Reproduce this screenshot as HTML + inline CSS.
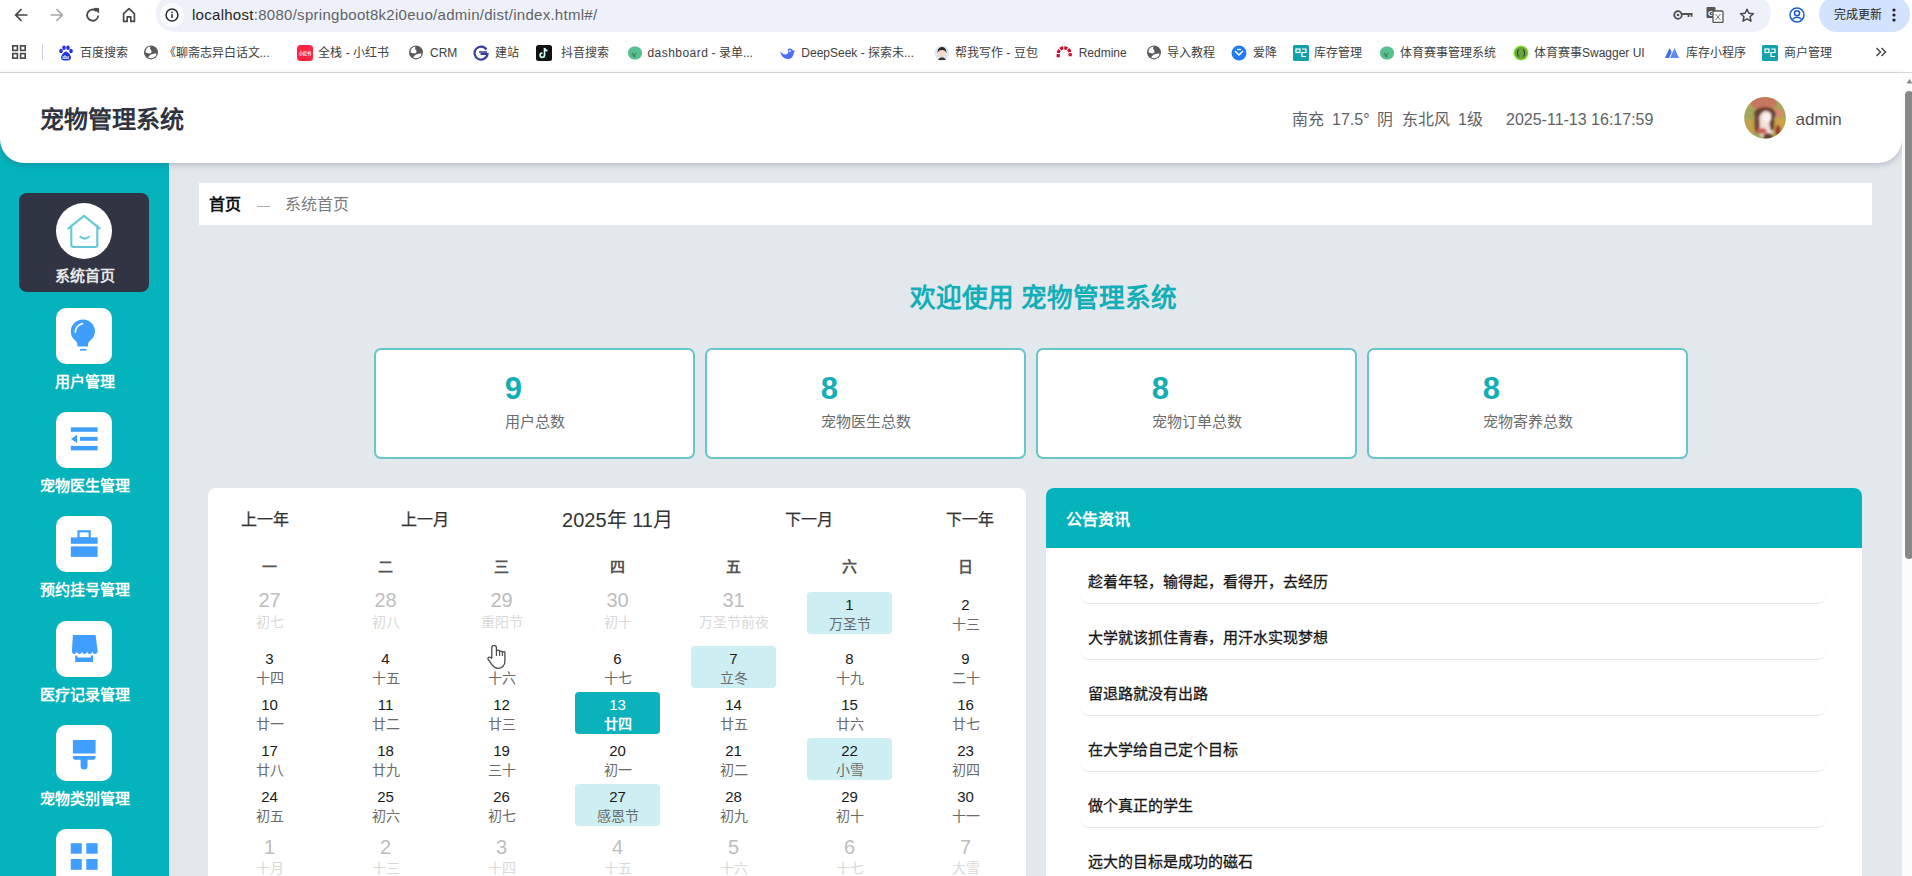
<!DOCTYPE html><html lang="zh-CN"><head><meta charset="utf-8"><title>宠物管理系统</title><style>
*{box-sizing:border-box;margin:0;padding:0}
html,body{width:1912px;height:876px;overflow:hidden;background:#fff}
body{position:relative;font-family:"Liberation Sans",sans-serif;}
.a{position:absolute;white-space:nowrap}
.t{line-height:1}
</style></head><body>
<div class="a" style="left:156px;top:-5px;width:1615px;height:36.5px;border-radius:18px;background:#eef1f9"></div>
<div class="a" style="left:160px;top:3px;width:24px;height:24px;border-radius:12px;background:#fafbfe"></div>
<svg class="a" style="left:13px;top:6px" width="16" height="18" viewBox="0 0 16 18"><path d="M14.5 9H3M8.5 3.2L2.7 9l5.8 5.8" fill="none" stroke="#474747" stroke-width="1.7"/></svg>
<svg class="a" style="left:49px;top:6px" width="16" height="18" viewBox="0 0 16 18"><path d="M1.5 9H13M7.5 3.2L13.3 9l-5.8 5.8" fill="none" stroke="#a9a9a9" stroke-width="1.7"/></svg>
<svg class="a" style="left:85px;top:6px" width="16" height="18" viewBox="0 0 16 18"><path d="M13.3 9.5A5.6 5.6 0 1 1 11.6 5.1" fill="none" stroke="#474747" stroke-width="1.8"/><path d="M9.2 2.4h4.4v4.4z" fill="#474747" stroke="#474747" stroke-width="1"/></svg>
<svg class="a" style="left:121px;top:6px" width="16" height="18" viewBox="0 0 16 18"><path d="M2.6 15.4V7.6L8 2.6l5.4 5V15.4h-3.6v-4.6H6.2v4.6z" fill="none" stroke="#474747" stroke-width="1.7" stroke-linejoin="round"/></svg>
<svg class="a" style="left:164px;top:7px" width="16" height="16" viewBox="0 0 16 16"><circle cx="8" cy="8" r="5.9" fill="none" stroke="#2b2b2b" stroke-width="1.5"/><rect x="7.3" y="7" width="1.5" height="4" fill="#2b2b2b"/><rect x="7.3" y="4.6" width="1.5" height="1.5" fill="#2b2b2b"/></svg>
<div class="a t" style="left:192px;top:7px;font-size:15px;color:#1f1f1f;letter-spacing:0.28px" id="url">localhost<span style="color:#5f6368">:8080/springboot8k2i0euo/admin/dist/index.html#/</span></div>
<svg class="a" style="left:1673px;top:9px" width="20" height="12" viewBox="0 0 20 12"><circle cx="5" cy="6" r="3.8" fill="none" stroke="#505050" stroke-width="1.8"/><circle cx="5" cy="6" r="1.3" fill="#505050"/><path d="M8.6 5h10v2.8M15.5 5v3" fill="none" stroke="#505050" stroke-width="1.8"/></svg>
<svg class="a" style="left:1706px;top:7px" width="18" height="16" viewBox="0 0 18 16"><rect x="0.5" y="0" width="9" height="11" rx="1" fill="#555"/><text x="2" y="9" font-size="8" font-weight="bold" fill="#fff" font-family="Liberation Sans">G</text><rect x="7" y="4" width="10" height="11.5" rx="1" fill="#fff" stroke="#555" stroke-width="1.3"/><path d="M9.5 7l5 6M14.5 7l-5 6" stroke="#777" stroke-width="1"/></svg>
<svg class="a" style="left:1739px;top:8px" width="16" height="14" viewBox="0 0 16 14"><path d="M8 1.2l1.9 4.1 4.5.4-3.4 3 1 4.4L8 10.8 4 13.1l1-4.4-3.4-3 4.5-.4z" fill="none" stroke="#474747" stroke-width="1.5" stroke-linejoin="round"/></svg>
<svg class="a" style="left:1789px;top:7px" width="16" height="16" viewBox="0 0 16 16"><circle cx="8" cy="8" r="7" fill="none" stroke="#1a5dc8" stroke-width="1.5"/><circle cx="8" cy="6.2" r="2.5" fill="none" stroke="#1a5dc8" stroke-width="1.5"/><path d="M3.3 12.6c1.2-1.7 2.8-2.4 4.7-2.4s3.5.7 4.7 2.4" fill="none" stroke="#1a5dc8" stroke-width="1.5"/></svg>
<div class="a" style="left:1819px;top:-4px;width:91px;height:35.6px;border-radius:18px;background:#d3e3fd"></div>
<div class="a t" style="left:1834px;top:8.5px;font-size:12px;color:#1f1f1f">完成更新</div>
<svg class="a" style="left:1891px;top:8px" width="6" height="14" viewBox="0 0 6 14"><circle cx="3" cy="2" r="1.6" fill="#1f1f1f"/><circle cx="3" cy="7" r="1.6" fill="#1f1f1f"/><circle cx="3" cy="12" r="1.6" fill="#1f1f1f"/></svg>
<svg class="a" style="left:12px;top:45px" width="14" height="14" viewBox="0 0 14 14" fill="none" stroke="#474747" stroke-width="1.6"><rect x="0.8" y="0.8" width="4.6" height="4.6"/><rect x="8.6" y="0.8" width="4.6" height="4.6"/><rect x="0.8" y="8.6" width="4.6" height="4.6"/><rect x="8.6" y="8.6" width="4.6" height="4.6"/></svg>
<div class="a" style="left:41.5px;top:44px;width:1px;height:16px;background:#c9d1e6"></div>
<svg class="a" style="left:58px;top:44.5px" width="16" height="16" viewBox="0 0 16 16"><g fill="#2932e1"><ellipse cx="3" cy="6" rx="1.8" ry="2.2"/><ellipse cx="6" cy="2.8" rx="1.8" ry="2.2"/><ellipse cx="10" cy="2.8" rx="1.8" ry="2.2"/><ellipse cx="13" cy="6" rx="1.8" ry="2.2"/><path d="M8 6.5c2 0 5 4 5 6.2 0 2-2 2.8-5 2.8s-5-.8-5-2.8C3 10.5 6 6.5 8 6.5z"/></g><text x="4.2" y="14" font-size="5.5" fill="#fff" font-family="Liberation Sans" font-weight="bold">du</text></svg>
<div class="a t" style="left:80px;top:46.8px;font-size:12px;color:#404040">百度搜索</div>
<svg class="a" style="left:143px;top:43.5px" width="16" height="16" viewBox="0 0 16 16"><circle cx="8" cy="8.4" r="7" fill="#5a5a5a"/><path d="M2.4 8.2C2.5 5.2 4.6 2.9 7.5 2.6 6.9 3.8 6.8 5 7.9 6 9.1 7.1 8.8 9.1 6.8 9.4 5.1 9.6 3.8 8.7 2.4 8.2Z" fill="#fff"/><path d="M4.9 13.3C6.3 12.3 7.1 10.9 8.9 10.3 10.6 9.7 12 9.3 13.6 9.7 13.1 12.5 10.8 14.2 8.1 14.2 6.9 14.2 5.8 13.9 4.9 13.3Z" fill="#fff"/></svg>
<div class="a t" style="left:163.5px;top:46.8px;font-size:12px;color:#404040">《聊斋志异白话文...</div>
<svg class="a" style="left:297px;top:44.5px" width="16" height="16" viewBox="0 0 16 16"><rect x="0" y="0" width="16" height="16" rx="3.5" fill="#ff2442"/><text x="8" y="9.6" font-size="4.2" text-anchor="middle" fill="#fff" font-weight="bold">小红书</text></svg>
<div class="a t" style="left:318.4px;top:46.8px;font-size:12px;color:#404040">全栈 - 小红书</div>
<svg class="a" style="left:408px;top:43.5px" width="16" height="16" viewBox="0 0 16 16"><circle cx="8" cy="8.4" r="7" fill="#5a5a5a"/><path d="M2.4 8.2C2.5 5.2 4.6 2.9 7.5 2.6 6.9 3.8 6.8 5 7.9 6 9.1 7.1 8.8 9.1 6.8 9.4 5.1 9.6 3.8 8.7 2.4 8.2Z" fill="#fff"/><path d="M4.9 13.3C6.3 12.3 7.1 10.9 8.9 10.3 10.6 9.7 12 9.3 13.6 9.7 13.1 12.5 10.8 14.2 8.1 14.2 6.9 14.2 5.8 13.9 4.9 13.3Z" fill="#fff"/></svg>
<div class="a t" style="left:430px;top:46.8px;font-size:12px;color:#404040">CRM</div>
<svg class="a" style="left:473px;top:44.5px" width="16" height="16" viewBox="0 0 16 16"><path d="M13.5 4.5A6.5 6.5 0 1 0 14.5 9H7.5" fill="none" stroke="#3a3f9e" stroke-width="2.2"/><path d="M6 7h8" stroke="#3a3f9e" stroke-width="1.6"/></svg>
<div class="a t" style="left:495px;top:46.8px;font-size:12px;color:#404040">建站</div>
<svg class="a" style="left:535.5px;top:44.5px" width="16" height="16" viewBox="0 0 16 16"><rect x="0" y="0" width="16" height="16" rx="2.5" fill="#111"/><path d="M8.5 3v7.2a2.2 2.2 0 1 1-2.2-2.2M8.5 3c.3 1.6 1.4 2.6 3 2.8" fill="none" stroke="#fff" stroke-width="1.6"/><path d="M9 3.3v7.2a2.2 2.2 0 1 1-2.2-2.2" fill="none" stroke="#25f4ee" stroke-width=".6" opacity=".8"/></svg>
<div class="a t" style="left:561px;top:46.8px;font-size:12px;color:#404040">抖音搜索</div>
<svg class="a" style="left:626.5px;top:44.5px" width="16" height="16" viewBox="0 0 16 16"><path d="M8 1.5c4 0 7 2.5 7 6.5s-3 6.5-7 6.5-7-2.5-7-6.5S4 1.5 8 1.5z" fill="#41b883" opacity=".9"/><text x="5" y="11.5" font-size="8" fill="#1d5e3f" font-family="Liberation Sans">v</text></svg>
<div class="a t" style="left:647.5px;top:46.8px;font-size:12px;color:#404040"><span style="letter-spacing:.45px">dashboard</span> - 录单...</div>
<svg class="a" style="left:779px;top:44.5px" width="16" height="16" viewBox="0 0 16 16"><path d="M1 6c1 5 4 8 8 8 3 0 5-2 5.5-5 .5-2 1.2-2.5 1.5-3.5-1 .5-2 .3-2.5-.5C12 3 10 3 8.5 4.5 10 6 9.5 9 7 9.5 4 10 2 7 1 6z" fill="#4d6bfe"/><circle cx="11" cy="6" r=".9" fill="#fff"/></svg>
<div class="a t" style="left:801.3px;top:46.8px;font-size:12px;color:#404040">DeepSeek - 探索未...</div>
<svg class="a" style="left:934px;top:44.5px" width="16" height="16" viewBox="0 0 16 16"><circle cx="8" cy="8" r="7.5" fill="#dfe8f5"/><ellipse cx="8" cy="8.5" rx="4" ry="5" fill="#f4d9c9"/><path d="M3.5 8c0-4 2-6 4.5-6s4.5 2 4.5 6c-1-2-2-3-4.5-3S4.5 6 3.5 8z" fill="#2a2a2a"/><path d="M4 15c1-2 2.5-2.5 4-2.5s3 .5 4 2.5z" fill="#333"/></svg>
<div class="a t" style="left:955px;top:46.8px;font-size:12px;color:#404040">帮我写作 - 豆包</div>
<svg class="a" style="left:1055.5px;top:44.5px" width="16" height="16" viewBox="0 0 16 16"><path d="M2.2 12.2V8.8A6 6 0 0 1 14.2 8.8V12.2" fill="none" stroke="#c8102e" stroke-width="3.2" stroke-dasharray="3.2 1"/></svg>
<div class="a t" style="left:1078.7px;top:46.8px;font-size:12px;color:#404040">Redmine</div>
<svg class="a" style="left:1146px;top:43.5px" width="16" height="16" viewBox="0 0 16 16"><circle cx="8" cy="8.4" r="7" fill="#5a5a5a"/><path d="M2.4 8.2C2.5 5.2 4.6 2.9 7.5 2.6 6.9 3.8 6.8 5 7.9 6 9.1 7.1 8.8 9.1 6.8 9.4 5.1 9.6 3.8 8.7 2.4 8.2Z" fill="#fff"/><path d="M4.9 13.3C6.3 12.3 7.1 10.9 8.9 10.3 10.6 9.7 12 9.3 13.6 9.7 13.1 12.5 10.8 14.2 8.1 14.2 6.9 14.2 5.8 13.9 4.9 13.3Z" fill="#fff"/></svg>
<div class="a t" style="left:1167px;top:46.8px;font-size:12px;color:#404040">导入教程</div>
<svg class="a" style="left:1230.7px;top:44.5px" width="16" height="16" viewBox="0 0 16 16"><circle cx="8" cy="8" r="7.5" fill="#1f7cf4"/><path d="M4 6l4 4 4-4" fill="none" stroke="#fff" stroke-width="1.5"/><path d="M6 4.5h4" stroke="#fff" stroke-width="1.3"/></svg>
<div class="a t" style="left:1252.7px;top:46.8px;font-size:12px;color:#404040">爱降</div>
<svg class="a" style="left:1292.5px;top:44.5px" width="16" height="16" viewBox="0 0 16 16"><rect x="0" y="0" width="16" height="16" rx="1.5" fill="#14a0a8"/><rect x="3" y="4" width="4" height="3.5" fill="none" stroke="#fff" stroke-width="1.2"/><path d="M9 4h4v3.5H9v4h4" fill="none" stroke="#fff" stroke-width="1.2"/></svg>
<div class="a t" style="left:1314px;top:46.8px;font-size:12px;color:#404040">库存管理</div>
<svg class="a" style="left:1379px;top:44.5px" width="16" height="16" viewBox="0 0 16 16"><path d="M8 1.5c4 0 7 2.5 7 6.5s-3 6.5-7 6.5-7-2.5-7-6.5S4 1.5 8 1.5z" fill="#41b883" opacity=".9"/><text x="5" y="11.5" font-size="8" fill="#1d5e3f" font-family="Liberation Sans">v</text></svg>
<div class="a t" style="left:1400px;top:46.8px;font-size:12px;color:#404040">体育赛事管理系统</div>
<svg class="a" style="left:1513px;top:44.5px" width="16" height="16" viewBox="0 0 16 16"><circle cx="8" cy="8" r="7.5" fill="#85ea2d"/><circle cx="8" cy="8" r="6.3" fill="#6ba539"/><path d="M6 4.5c-1.5 0-1 2-1.5 3.5L4 8l.5.1c.5 1.4 0 3.4 1.5 3.4M10 4.5c1.5 0 1 2 1.5 3.5L12 8l-.5.1c-.5 1.4 0 3.4-1.5 3.4" fill="none" stroke="#173647" stroke-width="1"/></svg>
<div class="a t" style="left:1534px;top:46.8px;font-size:12px;color:#404040">体育赛事Swagger UI</div>
<svg class="a" style="left:1664px;top:44.5px" width="16" height="16" viewBox="0 0 16 16"><path d="M1 13L5.5 3l2.2 4L5 13z" fill="#3d6fe8"/><path d="M6 13l4.5-10L15 13z" fill="#5b8cf7"/></svg>
<div class="a t" style="left:1686px;top:46.8px;font-size:12px;color:#404040">库存小程序</div>
<svg class="a" style="left:1762px;top:44.5px" width="16" height="16" viewBox="0 0 16 16"><rect x="0" y="0" width="16" height="16" rx="1.5" fill="#14a0a8"/><rect x="3" y="4" width="4" height="3.5" fill="none" stroke="#fff" stroke-width="1.2"/><path d="M9 4h4v3.5H9v4h4" fill="none" stroke="#fff" stroke-width="1.2"/></svg>
<div class="a t" style="left:1784px;top:46.8px;font-size:12px;color:#404040">商户管理</div>
<svg class="a" style="left:1875px;top:47px" width="12" height="10" viewBox="0 0 12 10"><path d="M1.5 1l4 4-4 4M6.5 1l4 4-4 4" fill="none" stroke="#474747" stroke-width="1.5"/></svg>
<div class="a" style="left:0;top:72px;width:1912px;height:1px;background:#dadce0"></div>
<div class="a" style="left:0;top:73px;width:1902px;height:803px;background:#e3e8ed"></div>
<div class="a" style="left:0;top:73px;width:169px;height:803px;background:#05b3bc"></div>
<div class="a" style="left:0;top:73px;width:1902px;height:89.5px;background:#fff;border-radius:0 0 24px 24px;box-shadow:0 2px 6px rgba(50,50,100,.26)"></div>
<div class="a t" style="left:40px;top:108px;font-size:24px;font-weight:bold;color:#303340">宠物管理系统</div>
<div class="a t" style="left:1292px;top:112px;font-size:16px;color:#606266">南充</div>
<div class="a t" style="left:1332px;top:112px;font-size:16px;color:#606266">17.5°</div>
<div class="a t" style="left:1377px;top:112px;font-size:16px;color:#606266">阴</div>
<div class="a t" style="left:1401.5px;top:112px;font-size:16px;color:#606266">东北风</div>
<div class="a t" style="left:1458px;top:112px;font-size:16px;color:#606266">1级</div>
<div class="a t" style="left:1506px;top:112px;font-size:16px;color:#606266" id="date">2025-11-13 16:17:59</div>
<svg class="a" style="left:1743.5px;top:97px" width="42" height="42" viewBox="0 0 42 42"><defs><clipPath id="cp"><circle cx="21" cy="20.8" r="20.8"/></clipPath><filter id="bl" x="-20%" y="-20%" width="140%" height="140%"><feGaussianBlur stdDeviation="1.3"/></filter></defs><g clip-path="url(#cp)"><rect width="42" height="42" fill="#a3a55a"/><g filter="url(#bl)"><ellipse cx="36" cy="30" rx="9" ry="10" fill="#c9a447"/><ellipse cx="5" cy="30" rx="6" ry="8" fill="#c2a24e"/><ellipse cx="20" cy="6" rx="13" ry="7" fill="#c7765e"/><ellipse cx="33" cy="16" rx="7" ry="4" fill="#d98770"/><ellipse cx="21" cy="17" rx="11" ry="7" fill="#6b4032"/><ellipse cx="22" cy="28" rx="8" ry="14" fill="#f1e2dc"/><ellipse cx="13" cy="27" rx="3" ry="9" fill="#7a4a3a"/><ellipse cx="28" cy="26" rx="2.5" ry="8" fill="#6a4036"/><ellipse cx="18" cy="34" rx="5" ry="3" fill="#cf5d58"/><ellipse cx="34" cy="34" rx="3" ry="6" fill="#a33c30"/><ellipse cx="23" cy="21" rx="4" ry="4" fill="#fbf2ee"/><ellipse cx="24" cy="40" rx="5" ry="4" fill="#6e4434"/></g></g></svg>
<div class="a t" style="left:1795.5px;top:110.5px;font-size:17px;color:#505050" id="admin">admin</div>
<div class="a" style="left:1902px;top:73px;width:10px;height:803px;background:#fcfcfc"></div>
<svg class="a" style="left:1905px;top:77px" width="9" height="8" viewBox="0 0 9 8"><path d="M1.5 6.5L4.5 2 7.5 6.5z" fill="#888"/></svg>
<div class="a" style="left:1905px;top:91px;width:8px;height:468px;border-radius:4px;background:#888"></div>
<div class="a" style="left:19px;top:193px;width:130px;height:99px;border-radius:8px;background:#313543"></div>
<div class="a" style="left:56px;top:202.5px;width:56px;height:56px;border-radius:28px;background:#fff"></div>
<svg class="a" style="left:56px;top:202.5px" width="56" height="56" viewBox="0 0 56 56"><path d="M12.4 25.4L28 12.9 43.6 25.4M15.3 22.8V41.8Q15.3 44 17.5 44H39.1Q41.3 44 41.3 41.8V22.8" fill="none" stroke="#66c7d9" stroke-width="2.1" stroke-linejoin="round" stroke-linecap="round"/><path d="M24.3 33.8Q28.6 37.4 32.9 33.8" fill="none" stroke="#66c7d9" stroke-width="2" stroke-linecap="round"/></svg>
<div class="a t" style="left:54.5px;top:268px;font-size:15px;font-weight:bold;color:#e8e8ea">系统首页</div>
<div class="a" style="left:56px;top:308.0px;width:56px;height:56px;border-radius:10px;background:#fff;overflow:hidden"><svg width="56" height="56" viewBox="0 0 56 56"><path d="M26.9 11.5c-6.8 0-12.1 5.3-12.1 12 0 3.9 1.8 6.9 4.3 9.1 1.5 1.3 2.3 2.6 2.3 4.3v1.5h10.6v-1.5c0-1.7.8-3 2.3-4.3 2.5-2.2 4.7-5.2 4.7-9.1 0-6.7-5.3-12-12.1-12z" fill="#409eff"/><path d="M19.2 24.2c.4-4.2 3.3-7.8 7.2-8.6" fill="none" stroke="#fff" stroke-width="1.6" stroke-linecap="round"/><rect x="24" y="40.9" width="6.4" height="1.7" fill="#409eff"/></svg></div>
<div class="a t" style="left:0;width:169px;text-align:center;top:374.0px;font-size:15px;font-weight:bold;color:#fff">用户管理</div>
<div class="a" style="left:56px;top:412.2px;width:56px;height:56px;border-radius:10px;background:#fff;overflow:hidden"><svg width="56" height="56" viewBox="0 0 56 56"><rect x="14.8" y="15.3" width="26.8" height="4.5" fill="#409eff"/><rect x="24" y="24.9" width="17.6" height="3.9" fill="#409eff"/><path d="M15 27L21.1 22.7V31.1z" fill="#409eff"/><rect x="14.8" y="33.9" width="26.8" height="4.5" fill="#409eff"/></svg></div>
<div class="a t" style="left:0;width:169px;text-align:center;top:478.2px;font-size:15px;font-weight:bold;color:#fff">宠物医生管理</div>
<div class="a" style="left:56px;top:516.4px;width:56px;height:56px;border-radius:10px;background:#fff;overflow:hidden"><svg width="56" height="56" viewBox="0 0 56 56"><rect x="22.5" y="15.3" width="11.2" height="7" fill="none" stroke="#409eff" stroke-width="2.2"/><rect x="14.8" y="21.4" width="26.8" height="6.4" fill="#409eff"/><rect x="14.8" y="30.4" width="26.8" height="10.5" fill="#409eff"/></svg></div>
<div class="a t" style="left:0;width:169px;text-align:center;top:582.4px;font-size:15px;font-weight:bold;color:#fff">预约挂号管理</div>
<div class="a" style="left:56px;top:620.6px;width:56px;height:56px;border-radius:10px;background:#fff;overflow:hidden"><svg width="56" height="56" viewBox="0 0 56 56"><path d="M16.9 14.1h22.7l2 16.2c0 1.6-1.2 2.7-2.6 2.7s-2.6-1.1-2.6-2.7c0 1.6-1.2 2.7-2.6 2.7s-2.6-1.1-2.6-2.7c0 1.6-1.2 2.7-2.6 2.7s-2.6-1.1-2.6-2.7c0 1.6-1.2 2.7-2.6 2.7s-2.6-1.1-2.6-2.7c0 1.6-1.2 2.7-2.6 2.7s-2.3-1.1-2.3-2.7z" fill="#409eff"/><path d="M19.2 34.5h2.2v2h13.4v-2h2.3v6.4H19.2z" fill="#409eff"/></svg></div>
<div class="a t" style="left:0;width:169px;text-align:center;top:686.6px;font-size:15px;font-weight:bold;color:#fff">医疗记录管理</div>
<div class="a" style="left:56px;top:724.8px;width:56px;height:56px;border-radius:10px;background:#fff;overflow:hidden"><svg width="56" height="56" viewBox="0 0 56 56"><rect x="16.9" y="15" width="22.7" height="13.5" fill="#409eff"/><path d="M16.9 31h22.7v1.2c0 1.5-1.1 2.6-2.6 2.6h-5.4v6.3a3.5 3.5 0 0 1-7 0v-6.3h-5.1c-1.5 0-2.6-1.1-2.6-2.6z" fill="#409eff"/></svg></div>
<div class="a t" style="left:0;width:169px;text-align:center;top:790.8px;font-size:15px;font-weight:bold;color:#fff">宠物类别管理</div>
<div class="a" style="left:56px;top:829.0px;width:56px;height:56px;border-radius:10px;background:#fff;overflow:hidden"><svg width="56" height="56" viewBox="0 0 56 56"><rect x="14.75" y="14.2" width="11" height="10.5" fill="#409eff"/><rect x="30.3" y="14.2" width="11.3" height="10.5" fill="#409eff"/><rect x="14.75" y="30" width="11" height="10.8" fill="#409eff"/><rect x="30.3" y="30" width="11.3" height="10.8" fill="#409eff"/></svg></div>
<div class="a" style="left:199px;top:183px;width:1673px;height:42px;background:#fff"></div>
<div class="a t" style="left:209px;top:196.5px;font-size:16px;font-weight:bold;color:#111">首页</div>
<div class="a" style="left:257px;top:205.5px;width:12.5px;height:1px;background:#aaa"></div>
<div class="a t" style="left:285px;top:196.5px;font-size:16px;color:#7c7c7c">系统首页</div>
<div class="a t" style="left:909.5px;top:286px;font-size:25.6px;font-weight:bold;color:#13afb8" id="title">欢迎使用 宠物管理系统</div>
<div class="a" style="left:374.2px;top:347.8px;width:321.2px;height:111px;border:2px solid #66c6ca;border-radius:7px;background:#fff"><div style="position:absolute;left:0;right:0;top:0;bottom:0;display:flex;justify-content:center"><div style="margin-top:21.7px;text-align:left"><div class="t" style="font-size:31px;font-weight:bold;color:#14aeb7;height:36px;line-height:36px">9</div><div class="t" style="font-size:15px;color:#6b6b6b;margin-top:6.5px">用户总数</div></div></div></div>
<div class="a" style="left:705.2px;top:347.8px;width:321.2px;height:111px;border:2px solid #66c6ca;border-radius:7px;background:#fff"><div style="position:absolute;left:0;right:0;top:0;bottom:0;display:flex;justify-content:center"><div style="margin-top:21.7px;text-align:left"><div class="t" style="font-size:31px;font-weight:bold;color:#14aeb7;height:36px;line-height:36px">8</div><div class="t" style="font-size:15px;color:#6b6b6b;margin-top:6.5px">宠物医生总数</div></div></div></div>
<div class="a" style="left:1036.2px;top:347.8px;width:321.2px;height:111px;border:2px solid #66c6ca;border-radius:7px;background:#fff"><div style="position:absolute;left:0;right:0;top:0;bottom:0;display:flex;justify-content:center"><div style="margin-top:21.7px;text-align:left"><div class="t" style="font-size:31px;font-weight:bold;color:#14aeb7;height:36px;line-height:36px">8</div><div class="t" style="font-size:15px;color:#6b6b6b;margin-top:6.5px">宠物订单总数</div></div></div></div>
<div class="a" style="left:1367.2px;top:347.8px;width:321.2px;height:111px;border:2px solid #66c6ca;border-radius:7px;background:#fff"><div style="position:absolute;left:0;right:0;top:0;bottom:0;display:flex;justify-content:center"><div style="margin-top:21.7px;text-align:left"><div class="t" style="font-size:31px;font-weight:bold;color:#14aeb7;height:36px;line-height:36px">8</div><div class="t" style="font-size:15px;color:#6b6b6b;margin-top:6.5px">宠物寄养总数</div></div></div></div>
<div class="a" style="left:208px;top:488px;width:818px;height:420px;border-radius:8px;background:#fff"></div>
<div class="a t" style="left:164.7px;width:200px;text-align:center;top:512px;font-size:16px;color:#333;-webkit-text-stroke:0.25px #333">上一年</div>
<div class="a t" style="left:324.8px;width:200px;text-align:center;top:512px;font-size:16px;color:#333;-webkit-text-stroke:0.25px #333">上一月</div>
<div class="a t" style="left:517.5px;width:200px;text-align:center;top:509.5px;font-size:20px;color:#333;-webkit-text-stroke:0px #333">2025年 11月</div>
<div class="a t" style="left:708.5px;width:200px;text-align:center;top:512px;font-size:16px;color:#333;-webkit-text-stroke:0.25px #333">下一月</div>
<div class="a t" style="left:870px;width:200px;text-align:center;top:512px;font-size:16px;color:#333;-webkit-text-stroke:0.25px #333">下一年</div>
<div class="a t" style="left:219.5px;width:100px;text-align:center;top:559px;font-size:15px;font-weight:bold;color:#555">一</div>
<div class="a t" style="left:335.5px;width:100px;text-align:center;top:559px;font-size:15px;font-weight:bold;color:#555">二</div>
<div class="a t" style="left:451.5px;width:100px;text-align:center;top:559px;font-size:15px;font-weight:bold;color:#555">三</div>
<div class="a t" style="left:567.5px;width:100px;text-align:center;top:559px;font-size:15px;font-weight:bold;color:#555">四</div>
<div class="a t" style="left:683.5px;width:100px;text-align:center;top:559px;font-size:15px;font-weight:bold;color:#555">五</div>
<div class="a t" style="left:799.5px;width:100px;text-align:center;top:559px;font-size:15px;font-weight:bold;color:#555">六</div>
<div class="a t" style="left:915.5px;width:100px;text-align:center;top:559px;font-size:15px;font-weight:bold;color:#555">日</div>
<div class="a t" style="left:209.5px;width:120px;text-align:center;top:590px;font-size:20px;color:#bdbdbd">27</div>
<div class="a t" style="left:209.5px;width:120px;text-align:center;top:614.5px;font-size:14px;color:#d9d9d9">初七</div>
<div class="a t" style="left:325.5px;width:120px;text-align:center;top:590px;font-size:20px;color:#bdbdbd">28</div>
<div class="a t" style="left:325.5px;width:120px;text-align:center;top:614.5px;font-size:14px;color:#d9d9d9">初八</div>
<div class="a t" style="left:441.5px;width:120px;text-align:center;top:590px;font-size:20px;color:#bdbdbd">29</div>
<div class="a t" style="left:441.5px;width:120px;text-align:center;top:614.5px;font-size:14px;color:#d9d9d9">重阳节</div>
<div class="a t" style="left:557.5px;width:120px;text-align:center;top:590px;font-size:20px;color:#bdbdbd">30</div>
<div class="a t" style="left:557.5px;width:120px;text-align:center;top:614.5px;font-size:14px;color:#d9d9d9">初十</div>
<div class="a t" style="left:673.5px;width:120px;text-align:center;top:590px;font-size:20px;color:#bdbdbd">31</div>
<div class="a t" style="left:673.5px;width:120px;text-align:center;top:614.5px;font-size:14px;color:#d9d9d9">万圣节前夜</div>
<div class="a" style="left:806.75px;top:592px;width:85.5px;height:41.5px;border-radius:4px;background:#cdeef3"></div>
<div class="a t" style="left:789.5px;width:120px;text-align:center;top:597px;font-size:15px;color:#1a1a1a">1</div>
<div class="a t" style="left:789.5px;width:120px;text-align:center;top:617px;font-size:14px;color:#6a6a6a;font-weight:normal">万圣节</div>
<div class="a t" style="left:905.5px;width:120px;text-align:center;top:597px;font-size:15px;color:#1a1a1a">2</div>
<div class="a t" style="left:905.5px;width:120px;text-align:center;top:617px;font-size:14px;color:#6a6a6a;font-weight:normal">十三</div>
<div class="a t" style="left:209.5px;width:120px;text-align:center;top:651.4px;font-size:15px;color:#1a1a1a">3</div>
<div class="a t" style="left:209.5px;width:120px;text-align:center;top:671.4px;font-size:14px;color:#6a6a6a;font-weight:normal">十四</div>
<div class="a t" style="left:325.5px;width:120px;text-align:center;top:651.4px;font-size:15px;color:#1a1a1a">4</div>
<div class="a t" style="left:325.5px;width:120px;text-align:center;top:671.4px;font-size:14px;color:#6a6a6a;font-weight:normal">十五</div>
<div class="a t" style="left:441.5px;width:120px;text-align:center;top:651.4px;font-size:15px;color:#1a1a1a"></div>
<div class="a t" style="left:441.5px;width:120px;text-align:center;top:671.4px;font-size:14px;color:#6a6a6a;font-weight:normal">十六</div>
<div class="a t" style="left:557.5px;width:120px;text-align:center;top:651.4px;font-size:15px;color:#1a1a1a">6</div>
<div class="a t" style="left:557.5px;width:120px;text-align:center;top:671.4px;font-size:14px;color:#6a6a6a;font-weight:normal">十七</div>
<div class="a" style="left:690.75px;top:646.4px;width:85.5px;height:41.5px;border-radius:4px;background:#cdeef3"></div>
<div class="a t" style="left:673.5px;width:120px;text-align:center;top:651.4px;font-size:15px;color:#1a1a1a">7</div>
<div class="a t" style="left:673.5px;width:120px;text-align:center;top:671.4px;font-size:14px;color:#6a6a6a;font-weight:normal">立冬</div>
<div class="a t" style="left:789.5px;width:120px;text-align:center;top:651.4px;font-size:15px;color:#1a1a1a">8</div>
<div class="a t" style="left:789.5px;width:120px;text-align:center;top:671.4px;font-size:14px;color:#6a6a6a;font-weight:normal">十九</div>
<div class="a t" style="left:905.5px;width:120px;text-align:center;top:651.4px;font-size:15px;color:#1a1a1a">9</div>
<div class="a t" style="left:905.5px;width:120px;text-align:center;top:671.4px;font-size:14px;color:#6a6a6a;font-weight:normal">二十</div>
<div class="a t" style="left:209.5px;width:120px;text-align:center;top:697.2px;font-size:15px;color:#1a1a1a">10</div>
<div class="a t" style="left:209.5px;width:120px;text-align:center;top:717.2px;font-size:14px;color:#6a6a6a;font-weight:normal">廿一</div>
<div class="a t" style="left:325.5px;width:120px;text-align:center;top:697.2px;font-size:15px;color:#1a1a1a">11</div>
<div class="a t" style="left:325.5px;width:120px;text-align:center;top:717.2px;font-size:14px;color:#6a6a6a;font-weight:normal">廿二</div>
<div class="a t" style="left:441.5px;width:120px;text-align:center;top:697.2px;font-size:15px;color:#1a1a1a">12</div>
<div class="a t" style="left:441.5px;width:120px;text-align:center;top:717.2px;font-size:14px;color:#6a6a6a;font-weight:normal">廿三</div>
<div class="a" style="left:574.75px;top:692.2px;width:85.5px;height:41.5px;border-radius:4px;background:#0cb2bb"></div>
<div class="a t" style="left:557.5px;width:120px;text-align:center;top:697.2px;font-size:15px;color:#fff">13</div>
<div class="a t" style="left:557.5px;width:120px;text-align:center;top:717.2px;font-size:14px;color:#fff;font-weight:bold">廿四</div>
<div class="a t" style="left:673.5px;width:120px;text-align:center;top:697.2px;font-size:15px;color:#1a1a1a">14</div>
<div class="a t" style="left:673.5px;width:120px;text-align:center;top:717.2px;font-size:14px;color:#6a6a6a;font-weight:normal">廿五</div>
<div class="a t" style="left:789.5px;width:120px;text-align:center;top:697.2px;font-size:15px;color:#1a1a1a">15</div>
<div class="a t" style="left:789.5px;width:120px;text-align:center;top:717.2px;font-size:14px;color:#6a6a6a;font-weight:normal">廿六</div>
<div class="a t" style="left:905.5px;width:120px;text-align:center;top:697.2px;font-size:15px;color:#1a1a1a">16</div>
<div class="a t" style="left:905.5px;width:120px;text-align:center;top:717.2px;font-size:14px;color:#6a6a6a;font-weight:normal">廿七</div>
<div class="a t" style="left:209.5px;width:120px;text-align:center;top:743.2px;font-size:15px;color:#1a1a1a">17</div>
<div class="a t" style="left:209.5px;width:120px;text-align:center;top:763.2px;font-size:14px;color:#6a6a6a;font-weight:normal">廿八</div>
<div class="a t" style="left:325.5px;width:120px;text-align:center;top:743.2px;font-size:15px;color:#1a1a1a">18</div>
<div class="a t" style="left:325.5px;width:120px;text-align:center;top:763.2px;font-size:14px;color:#6a6a6a;font-weight:normal">廿九</div>
<div class="a t" style="left:441.5px;width:120px;text-align:center;top:743.2px;font-size:15px;color:#1a1a1a">19</div>
<div class="a t" style="left:441.5px;width:120px;text-align:center;top:763.2px;font-size:14px;color:#6a6a6a;font-weight:normal">三十</div>
<div class="a t" style="left:557.5px;width:120px;text-align:center;top:743.2px;font-size:15px;color:#1a1a1a">20</div>
<div class="a t" style="left:557.5px;width:120px;text-align:center;top:763.2px;font-size:14px;color:#6a6a6a;font-weight:normal">初一</div>
<div class="a t" style="left:673.5px;width:120px;text-align:center;top:743.2px;font-size:15px;color:#1a1a1a">21</div>
<div class="a t" style="left:673.5px;width:120px;text-align:center;top:763.2px;font-size:14px;color:#6a6a6a;font-weight:normal">初二</div>
<div class="a" style="left:806.75px;top:738.2px;width:85.5px;height:41.5px;border-radius:4px;background:#cdeef3"></div>
<div class="a t" style="left:789.5px;width:120px;text-align:center;top:743.2px;font-size:15px;color:#1a1a1a">22</div>
<div class="a t" style="left:789.5px;width:120px;text-align:center;top:763.2px;font-size:14px;color:#6a6a6a;font-weight:normal">小雪</div>
<div class="a t" style="left:905.5px;width:120px;text-align:center;top:743.2px;font-size:15px;color:#1a1a1a">23</div>
<div class="a t" style="left:905.5px;width:120px;text-align:center;top:763.2px;font-size:14px;color:#6a6a6a;font-weight:normal">初四</div>
<div class="a t" style="left:209.5px;width:120px;text-align:center;top:789.2px;font-size:15px;color:#1a1a1a">24</div>
<div class="a t" style="left:209.5px;width:120px;text-align:center;top:809.2px;font-size:14px;color:#6a6a6a;font-weight:normal">初五</div>
<div class="a t" style="left:325.5px;width:120px;text-align:center;top:789.2px;font-size:15px;color:#1a1a1a">25</div>
<div class="a t" style="left:325.5px;width:120px;text-align:center;top:809.2px;font-size:14px;color:#6a6a6a;font-weight:normal">初六</div>
<div class="a t" style="left:441.5px;width:120px;text-align:center;top:789.2px;font-size:15px;color:#1a1a1a">26</div>
<div class="a t" style="left:441.5px;width:120px;text-align:center;top:809.2px;font-size:14px;color:#6a6a6a;font-weight:normal">初七</div>
<div class="a" style="left:574.75px;top:784.2px;width:85.5px;height:41.5px;border-radius:4px;background:#cdeef3"></div>
<div class="a t" style="left:557.5px;width:120px;text-align:center;top:789.2px;font-size:15px;color:#1a1a1a">27</div>
<div class="a t" style="left:557.5px;width:120px;text-align:center;top:809.2px;font-size:14px;color:#6a6a6a;font-weight:normal">感恩节</div>
<div class="a t" style="left:673.5px;width:120px;text-align:center;top:789.2px;font-size:15px;color:#1a1a1a">28</div>
<div class="a t" style="left:673.5px;width:120px;text-align:center;top:809.2px;font-size:14px;color:#6a6a6a;font-weight:normal">初九</div>
<div class="a t" style="left:789.5px;width:120px;text-align:center;top:789.2px;font-size:15px;color:#1a1a1a">29</div>
<div class="a t" style="left:789.5px;width:120px;text-align:center;top:809.2px;font-size:14px;color:#6a6a6a;font-weight:normal">初十</div>
<div class="a t" style="left:905.5px;width:120px;text-align:center;top:789.2px;font-size:15px;color:#1a1a1a">30</div>
<div class="a t" style="left:905.5px;width:120px;text-align:center;top:809.2px;font-size:14px;color:#6a6a6a;font-weight:normal">十一</div>
<div class="a t" style="left:209.5px;width:120px;text-align:center;top:836.5px;font-size:20px;color:#bdbdbd">1</div>
<div class="a t" style="left:209.5px;width:120px;text-align:center;top:861.0px;font-size:14px;color:#d9d9d9">十月</div>
<div class="a t" style="left:325.5px;width:120px;text-align:center;top:836.5px;font-size:20px;color:#bdbdbd">2</div>
<div class="a t" style="left:325.5px;width:120px;text-align:center;top:861.0px;font-size:14px;color:#d9d9d9">十三</div>
<div class="a t" style="left:441.5px;width:120px;text-align:center;top:836.5px;font-size:20px;color:#bdbdbd">3</div>
<div class="a t" style="left:441.5px;width:120px;text-align:center;top:861.0px;font-size:14px;color:#d9d9d9">十四</div>
<div class="a t" style="left:557.5px;width:120px;text-align:center;top:836.5px;font-size:20px;color:#bdbdbd">4</div>
<div class="a t" style="left:557.5px;width:120px;text-align:center;top:861.0px;font-size:14px;color:#d9d9d9">十五</div>
<div class="a t" style="left:673.5px;width:120px;text-align:center;top:836.5px;font-size:20px;color:#bdbdbd">5</div>
<div class="a t" style="left:673.5px;width:120px;text-align:center;top:861.0px;font-size:14px;color:#d9d9d9">十六</div>
<div class="a t" style="left:789.5px;width:120px;text-align:center;top:836.5px;font-size:20px;color:#bdbdbd">6</div>
<div class="a t" style="left:789.5px;width:120px;text-align:center;top:861.0px;font-size:14px;color:#d9d9d9">十七</div>
<div class="a t" style="left:905.5px;width:120px;text-align:center;top:836.5px;font-size:20px;color:#bdbdbd">7</div>
<div class="a t" style="left:905.5px;width:120px;text-align:center;top:861.0px;font-size:14px;color:#d9d9d9">大雪</div>
<svg class="a" style="left:487px;top:644.8px" width="20" height="25" viewBox="0 0 20 25"><path d="M4.8 13.2V2.7A2.3 2.3 0 0 1 9.4 2.7V6.6A1.6 1.6 0 0 1 12.6 6.9A1.5 1.5 0 0 1 15.4 7.4A1.3 1.3 0 0 1 17.9 8.4V16.5C17.9 20.5 15 23.4 11 23.4C7.9 23.4 6.3 21.6 4.9 19.7L1.3 14.7C.3 13.3 1.7 11.6 3.1 12.3Z" fill="#fff" stroke="#4a4a4a" stroke-width="1.3" stroke-linejoin="round"/><path d="M9.4 6.6V11M12.6 6.9V11M15.4 7.4V11" stroke="#4a4a4a" stroke-width="1.1"/></svg>
<div class="a" style="left:1046px;top:488px;width:816px;height:420px;border-radius:8px;background:#fff;overflow:hidden"><div style="height:60px;background:#05b3bc"></div></div>
<div class="a t" style="left:1066px;top:512px;font-size:16px;font-weight:bold;color:#fff">公告资讯</div>
<div class="a" style="left:1080px;top:591.5px;width:747px;height:12.5px;border-bottom:1.3px solid #e2e2e2;border-radius:0 0 9px 9px"></div>
<div class="a t" style="left:1088px;top:573.5px;font-size:15px;color:#151515;-webkit-text-stroke:0.28px #151515">趁着年轻，输得起，看得开，去经历</div>
<div class="a" style="left:1080px;top:647.5px;width:747px;height:12.5px;border-bottom:1.3px solid #e2e2e2;border-radius:0 0 9px 9px"></div>
<div class="a t" style="left:1088px;top:629.5px;font-size:15px;color:#151515;-webkit-text-stroke:0.28px #151515">大学就该抓住青春，用汗水实现梦想</div>
<div class="a" style="left:1080px;top:703.5px;width:747px;height:12.5px;border-bottom:1.3px solid #e2e2e2;border-radius:0 0 9px 9px"></div>
<div class="a t" style="left:1088px;top:685.5px;font-size:15px;color:#151515;-webkit-text-stroke:0.28px #151515">留退路就没有出路</div>
<div class="a" style="left:1080px;top:759.5px;width:747px;height:12.5px;border-bottom:1.3px solid #e2e2e2;border-radius:0 0 9px 9px"></div>
<div class="a t" style="left:1088px;top:741.5px;font-size:15px;color:#151515;-webkit-text-stroke:0.28px #151515">在大学给自己定个目标</div>
<div class="a" style="left:1080px;top:815.5px;width:747px;height:12.5px;border-bottom:1.3px solid #e2e2e2;border-radius:0 0 9px 9px"></div>
<div class="a t" style="left:1088px;top:797.5px;font-size:15px;color:#151515;-webkit-text-stroke:0.28px #151515">做个真正的学生</div>
<div class="a" style="left:1080px;top:871.5px;width:747px;height:12.5px;border-bottom:1.3px solid #e2e2e2;border-radius:0 0 9px 9px"></div>
<div class="a t" style="left:1088px;top:853.5px;font-size:15px;color:#151515;-webkit-text-stroke:0.28px #151515">远大的目标是成功的磁石</div>
</body></html>
